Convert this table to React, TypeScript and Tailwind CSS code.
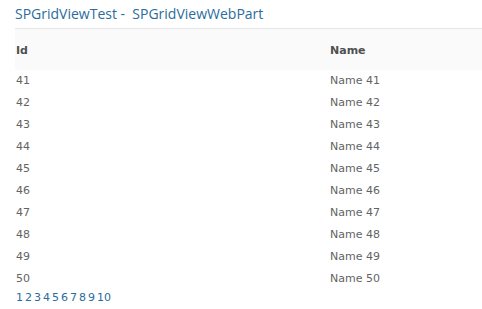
const ROWS = Array.from({ length: 10 }, (_, i) => 41 + i);
const PAGES = Array.from({ length: 10 }, (_, i) => i + 1);

export default function App() {
  return (
    <div className="w-[482px] h-[309px] bg-white overflow-hidden pl-[15px] font-['DejaVu_Sans',Verdana,sans-serif]">
      {/* Web part title */}
      <div className="h-[28px] flex items-center pb-[1px] font-['Open_Sans',sans-serif] text-[14px] text-[#2a6c9c] whitespace-pre">
        SPGridViewTest -  SPGridViewWebPart
      </div>

      <div className="border-t border-[#e6e6e6]">
        {/* Header row */}
        <div className="flex h-[41px] pt-[14px] bg-[#fafafa] text-[11px] leading-[16px] font-bold text-[#505050]">
          <div className="w-[315px] pl-[1px]">Id</div>
          <div>Name</div>
        </div>

        {/* Data rows */}
        {ROWS.map((n) => (
          <div key={n} className="flex h-[22px] items-center text-[11px] text-[#636363]">
            <div className="w-[315px] pl-[1px]">{n}</div>
            <div>Name {n}</div>
          </div>
        ))}

        {/* Pager */}
        <div className="flex gap-[2px] pl-[1px] text-[11px] leading-[16px] text-[#2a6c9c]">
          {PAGES.map((p) => (
            <span key={p}>{p}</span>
          ))}
        </div>
      </div>
    </div>
  );
}
